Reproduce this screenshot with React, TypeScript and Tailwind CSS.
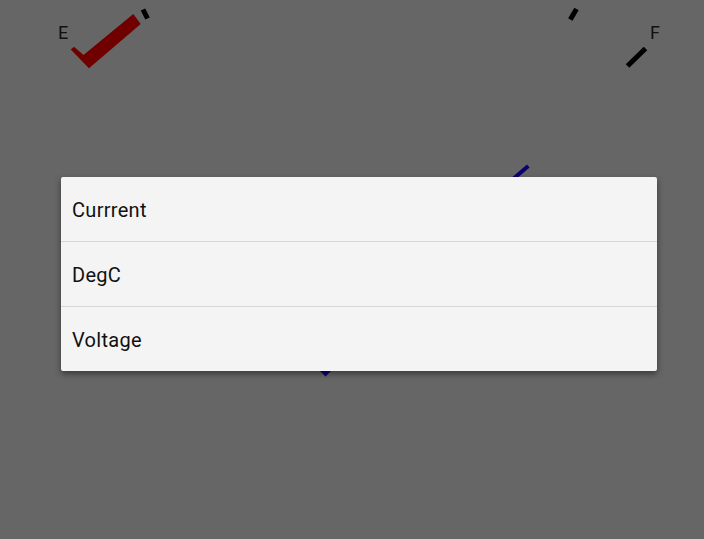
import React from "react";

const items = ["Currrent", "DegC", "Voltage"];

function Gauge() {
  return (
    <svg
      className="absolute inset-0"
      width={704}
      height={539}
      viewBox="0 0 704 539"
    >
      <text x={58} y={38.5} fontSize={18} fill="#111" fontFamily="Roboto, sans-serif">
        E
      </text>
      <text x={650} y={38.5} fontSize={18} fill="#111" fontFamily="Roboto, sans-serif">
        F
      </text>
      <polygon
        points="70.7,49.5 74,46.8 83.5,55 133.3,14 140.7,24 89,68.3"
        fill="#700000"
      />
      <line x1={143} y1={9.5} x2={147.5} y2={18.5} stroke="#000" strokeWidth={5} />
      <line x1={576.5} y1={9} x2={570.3} y2={19.5} stroke="#000" strokeWidth={5} />
      <line x1={645.5} y1={48.5} x2={627.5} y2={66} stroke="#000" strokeWidth={5} />
      <line x1={528.3} y1={166} x2={505} y2={186} stroke="#0a0070" strokeWidth={4} />
      <polygon points="320,371 331,371 325.5,376.5" fill="#0a0070" />
    </svg>
  );
}

export default function App() {
  return (
    <div className="relative w-[704px] h-[539px] overflow-hidden bg-[#666666] font-['Roboto',sans-serif]">
      <Gauge />
      <div className="absolute left-[61px] top-[177px] w-[596px] rounded-[2px] bg-[#f4f4f4] shadow-[0_3px_6px_rgba(0,0,0,0.45)]">
        {items.map((item, i) => (
          <div
            key={item}
            className={
              i < items.length - 1
                ? "h-[65px] flex items-center pl-[11px] pt-[2px] border-b border-[#d6d6d6] text-[20px] tracking-[0.3px] text-[#111]"
                : "h-[64px] flex items-center pl-[11px] pt-[2px] text-[20px] tracking-[0.3px] text-[#111]"
            }
          >
            {item}
          </div>
        ))}
      </div>
    </div>
  );
}
